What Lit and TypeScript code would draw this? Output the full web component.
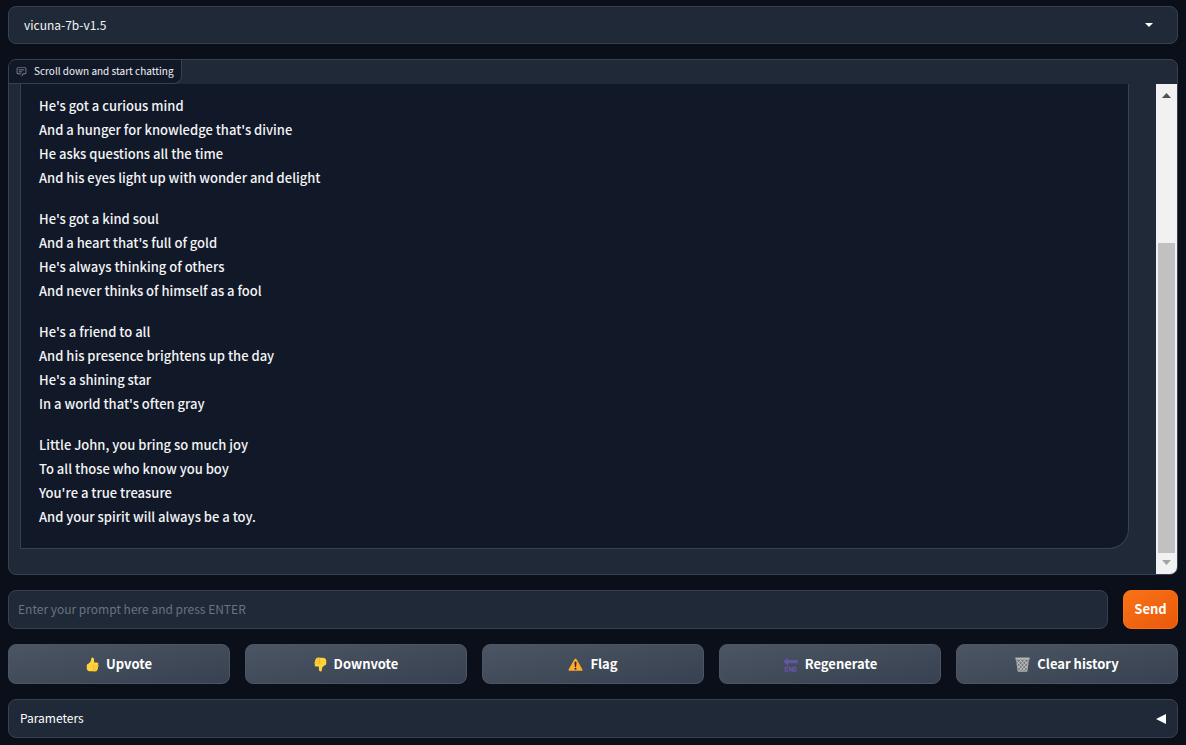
import { LitElement, html, css, svg } from "lit";
import { customElement, state } from "lit/decorators.js";

const verses: string[][] = [
  [
    "He's got a curious mind",
    "And a hunger for knowledge that's divine",
    "He asks questions all the time",
    "And his eyes light up with wonder and delight",
  ],
  [
    "He's got a kind soul",
    "And a heart that's full of gold",
    "He's always thinking of others",
    "And never thinks of himself as a fool",
  ],
  [
    "He's a friend to all",
    "And his presence brightens up the day",
    "He's a shining star",
    "In a world that's often gray",
  ],
  [
    "Little John, you bring so much joy",
    "To all those who know you boy",
    "You're a true treasure",
    "And your spirit will always be a toy.",
  ],
];

const thumb = svg`
  <path fill="#ffd43a" d="M5.600 1.600Q5.800 .2 7.200 .4Q8.700 .7 8.800 3.200L8.700 5.800H11.400Q13.300 5.800 13.300 7.200Q13.300 8.100 12.800 8.500Q13.500 9.100 13.300 10.100Q13.200 10.800 12.700 11.100Q13.100 11.800 12.800 12.500Q12.600 13 12.100 13.300Q12.200 15.400 10.200 15.400H4.800Q1 15.400 .8 12V9.200Q.8 7.400 2.800 6.800Q5.400 5.400 5.500 3Z"/>
  <path fill="#fbb92c" d="M7.400 7.800Q7.800 8.600 9 8.600H13Q13.500 9.400 13.200 10.400L12.700 11.100Q13 12 12.700 12.700L12.100 13.300Q12.200 15.400 10.200 15.400H7.400Z"/>
  <path fill="#ffd43a" d="M8.600 9.300H12.600V10.600H8.600ZM8.600 11.600H12.300V12.800H8.600ZM8.600 13.700H11.600V14.700H8.600Z"/>`;

const icons = {
  up: thumb,
  down: svg`<g transform="rotate(180 7 8)">${thumb}</g>`,
  flag: svg`
    <path fill="#ffab2e" d="M8 1.5Q8.6 1.5 9 2.2L15.4 13.4Q15.9 14.6 14.8 14.6H1.2Q.1 14.6 .6 13.4L7 2.2Q7.4 1.5 8 1.5Z"/>
    <path fill="#2b2930" d="M6.9 5.2Q8 4.2 9.1 5.2L8.6 10.6H7.4Z"/>
    <circle cx="8" cy="12.6" r="1.1" fill="#2b2930"/>`,
  end: svg`
    <path fill="#6554a0" d="M.2 4.8L5.4 .4V3.2H15.8V6.6H5.4V9.2Z"/>
    <path fill="none" stroke="#6554a0" stroke-width="1.3" d="M5.2 10.9H2.4V15.2H5.2M2.4 13H4.8M6.8 15.8V11L9.8 15.2V10.4M11.5 10.9V15.2H12.2Q13.9 15.2 13.9 13T12.2 10.9Z"/>`,
  bin: svg`
    <path fill="#77797d" d="M1.2 2H14.8L13 15.6H3Z"/>
    <path fill="none" stroke="#c9cacc" stroke-width=".9" d="M2 4L11.8 15M5 3L13.2 12M9 3L14 8.4M2.4 8.4L8.2 15M14 4L4.2 15M11 3L2.8 12M7 3L2 8.4M13.6 8.4L7.8 15"/>
    <path fill="none" stroke="#a9abad" stroke-width="1" d="M1.8 3L3.3 15.2H12.7L14.2 3"/>
    <path fill="#b9babc" d="M.4 .6H15.6V2.8H.4Z"/>`,
};

@customElement("app-root")
export class AppRoot extends LitElement {
  @state() private open = false;

  static styles = css`
    :host {
      display: block;
      min-height: 100vh;
      background: #0b0f19;
      color: #f3f4f6;
      font-family: "Noto Sans CJK SC", "Noto Sans", sans-serif;
      font-size: 13px;
    }
    * {
      box-sizing: border-box;
    }
    .page {
      display: flex;
      flex-direction: column;
      gap: 15px;
      padding: 6px 8px 7px;
    }
    .block {
      background: #1f2937;
      border: 1px solid #374151;
      border-radius: 8px;
    }
    .model {
      display: grid;
      align-items: center;
    }
    .model > * {
      grid-area: 1 / 1;
    }
    .model select {
      appearance: none;
      width: 100%;
      height: 36px;
      padding: 0 15px;
      border: 0;
      border-radius: 8px;
      background: transparent;
      color: inherit;
      font: 400 12px / 18px "Noto Sans CJK SC", sans-serif;
    }
    .caret {
      justify-self: end;
      width: 8px;
      height: 4px;
      margin-right: 24px;
      fill: #fff;
      pointer-events: none;
    }
    .chat {
      overflow: hidden;
    }
    .label {
      display: inline-flex;
      align-items: center;
      gap: 7px;
      height: 24px;
      padding: 0 7px;
      border: solid #374151;
      border-width: 0 1px 1px 0;
      border-radius: 0 0 8px 0;
      background: #111827;
      font-size: 10px;
      line-height: 16px;
      vertical-align: top;
    }
    .label span {
      padding-bottom: 2px;
    }
    .label svg {
      width: 11px;
      height: 11px;
      color: #9ca3af;
    }
    .view {
      display: flex;
      gap: 27px;
      padding-left: 11px;
    }
    .message {
      flex: 1;
      margin-bottom: 25px;
      padding: 10px 18px 19px;
      border: solid #374151;
      border-width: 0 1px 1px;
      border-radius: 0 0 20px 0;
      background: #111827;
      font-weight: 500;
      line-height: 24px;
    }
    .message p {
      margin: 0 0 17px;
    }
    .message p:last-child {
      margin: 0;
    }
    .scroll {
      display: flex;
      flex-direction: column;
      width: 21px;
      background: #f1f1f1;
    }
    .scroll svg {
      flex: none;
      width: 21px;
      height: 21px;
    }
    .track {
      flex: 1;
      display: grid;
      grid-template-rows: 138fr 310fr;
      padding: 0 2px;
    }
    .grip {
      grid-row: 2;
      background: #c1c1c1;
    }
    .prompt {
      display: flex;
      gap: 15px;
    }
    .prompt input {
      flex: 1;
      min-width: 0;
      height: 39px;
      padding: 0 9px 2px;
      color: inherit;
      font: 400 12px / 18px "Noto Sans CJK SC", sans-serif;
    }
    .prompt input::placeholder {
      color: #6b7280;
      opacity: 1;
    }
    button {
      display: flex;
      align-items: center;
      justify-content: center;
      gap: 7px;
      border-radius: 8px;
      color: #fff;
      font: 700 13px / 20px "Noto Sans CJK SC", sans-serif;
    }
    .send {
      width: 55px;
      padding: 0 0 2px;
      border: 1px solid #f97316;
      background: linear-gradient(to bottom right, #f97316, #ea580c);
    }
    .actions {
      display: grid;
      grid-template-columns: repeat(5, 1fr);
      gap: 15px;
    }
    .actions button {
      height: 40px;
      padding: 0;
      border: 1px solid #4b5563;
      background: linear-gradient(to bottom right, #4b5563, #374151);
    }
    .actions svg {
      width: 15px;
      height: 15px;
    }
    .actions .narrow {
      width: 13px;
    }
    .params {
      justify-content: space-between;
      height: 39px;
      padding: 0 11px;
      font-size: 12px;
      font-weight: 400;
    }
    .params span {
      padding-bottom: 2px;
    }
    .params svg {
      width: 10px;
      height: 10px;
      fill: #fff;
    }
    .params .turned {
      transform: rotate(-90deg);
    }
  `;

  private action(icon: keyof typeof icons, text: string) {
    const narrow = icon === "up" || icon === "down";
    return html`<button type="button">
      <svg class=${narrow ? "narrow" : ""} viewBox=${narrow ? "0 0 14 16" : "0 0 16 16"} aria-hidden="true">
        ${icons[icon]}
      </svg>
      <span>${text}</span>
    </button>`;
  }

  render() {
    return html`<main class="page">
      <div class="block model">
        <select aria-label="Model">
          <option>vicuna-7b-v1.5</option>
        </select>
        <svg class="caret" viewBox="0 0 8 4" aria-hidden="true"><path d="M0 0H8L4 4Z" /></svg>
      </div>

      <section class="block chat" aria-labelledby="chat-label">
        <div class="label">
          <svg viewBox="0 0 32 32" fill="currentColor" aria-hidden="true">
            <path d="M17.74 30L16 29l4-7h6a2 2 0 0 0 2-2V8a2 2 0 0 0-2-2H6a2 2 0 0 0-2 2v12a2 2 0 0 0 2 2h9v2H6a4 4 0 0 1-4-4V8a4 4 0 0 1 4-4h20a4 4 0 0 1 4 4v12a4 4 0 0 1-4 4h-4.84Z" />
            <path d="M8 10h16v2H8zM8 16h10v2H8z" />
          </svg>
          <span id="chat-label">Scroll down and start chatting</span>
        </div>
        <div class="view">
          <article class="message">
            ${verses.map(
              (lines) => html`<p>${lines.map((line, i) => (i ? html`<br />${line}` : line))}</p>`
            )}
          </article>
          <div class="scroll" aria-hidden="true">
            <svg viewBox="0 0 21 21"><path fill="#505050" d="M6 14H15L10.5 9Z" /></svg>
            <div class="track"><div class="grip"></div></div>
            <svg viewBox="0 0 21 21"><path fill="#a3a3a3" d="M6 7H15L10.5 12Z" /></svg>
          </div>
        </div>
      </section>

      <form class="prompt" @submit=${(e: Event) => e.preventDefault()}>
        <input class="block" type="text" aria-label="Prompt" placeholder="Enter your prompt here and press ENTER" />
        <button class="send" type="submit">Send</button>
      </form>

      <div class="actions">
        ${this.action("up", "Upvote")} ${this.action("down", "Downvote")} ${this.action("flag", "Flag")}
        ${this.action("end", "Regenerate")} ${this.action("bin", "Clear history")}
      </div>

      <button
        class="block params"
        type="button"
        aria-expanded=${this.open ? "true" : "false"}
        @click=${() => (this.open = !this.open)}
      >
        <span>Parameters</span>
        <svg class=${this.open ? "turned" : ""} viewBox="0 0 10 10" aria-hidden="true"><path d="M10 0V10L0 5Z" /></svg>
      </button>
    </main>`;
  }
}
